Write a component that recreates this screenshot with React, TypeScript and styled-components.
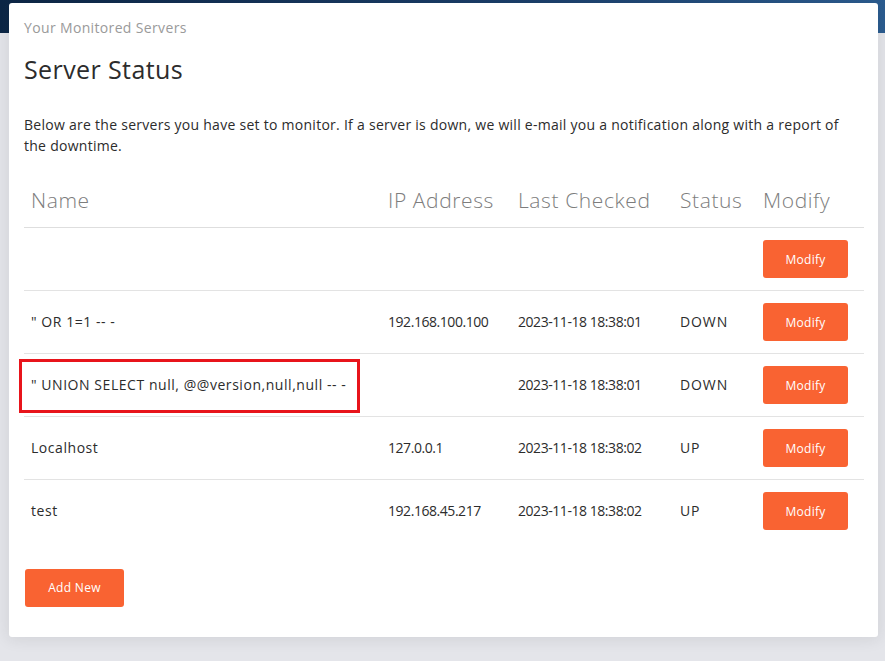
import React from "react";
import styled, { createGlobalStyle } from "styled-components";

const Global = createGlobalStyle`
  html, body { margin: 0; padding: 0; }
  body {
    background: #e4e5ea;
    font-family: "Open Sans", "Liberation Sans", sans-serif;
    color: #2c2c2c;
    width: 885px;
    height: 661px;
    overflow: hidden;
  }
`;

const Page = styled.div`
  position: relative;
  min-height: 661px;
  padding: 3px 7px 0 9px;
  box-sizing: border-box;
  background: linear-gradient(to bottom, transparent 0, transparent 33px, #e4e5ea 33px),
    linear-gradient(to right, #0c2646 0%, #1b3f6b 60%, #2b5c90 100%);
  background-repeat: no-repeat;
  background-size: 100% 100%, 100% 33px;
`;

const Card = styled.div`
  background: #fff;
  border-radius: 3px;
  box-shadow: 0 1px 15px 1px rgba(39, 39, 39, 0.1);
  padding: 16px 14px 29px 15px;
  box-sizing: border-box;
  height: 634px;
`;

const Category = styled.div`
  font-size: 14px;
  color: #9a9a9a;
  line-height: 18px;
  letter-spacing: 0.35px;
`;

const Title = styled.h4`
  margin: 17px 0 0;
  font-size: 25px;
  font-weight: 400;
  line-height: 30px;
  letter-spacing: 0.4px;
  color: #2c2c2c;
`;

const Intro = styled.p`
  margin: 30px 0 0;
  font-size: 14px;
  line-height: 21px;
  letter-spacing: 0.27px;
  color: #2c2c2c;
`;

const Table = styled.table`
  width: 100%;
  margin-top: 20px;
  border-collapse: collapse;
`;

const Th = styled.th<{ $w?: number }>`
  text-align: left;
  font-weight: 300;
  font-size: 21px;
  letter-spacing: 0.6px;
  color: #7d7d7d;
  padding: 10px 7px 13px 7px;
  height: 51px;
  box-sizing: border-box;
  border-bottom: 1px solid #dedede;
  white-space: nowrap;
  ${(p) => (p.$w ? `width: ${p.$w}px;` : "")}
`;

const Td = styled.td<{ $spacing?: number }>`
  font-size: 14px;
  line-height: 20px;
  letter-spacing: ${(p) => p.$spacing ?? 0.55}px;
  color: #2c2c2c;
  padding: 0 7px;
  height: 63px;
  box-sizing: border-box;
  border-bottom: 1px solid #e3e3e3;
  white-space: nowrap;
  vertical-align: middle;
`;

const Row = styled.tr<{ $last?: boolean }>`
  ${(p) => (p.$last ? "td { border-bottom: none; }" : "")}
`;

const NameWrap = styled.span`
  position: relative;
  display: inline-block;
  line-height: 20px;
`;

const Highlight = styled.span`
  position: absolute;
  left: -12px;
  right: -14px;
  top: -16px;
  bottom: -18px;
  border: 3px solid #e8141b;
  pointer-events: none;
`;

const Button = styled.button<{ $wide?: boolean }>`
  font-family: inherit;
  background: #f96332;
  color: #fff;
  border: none;
  border-radius: 3px;
  font-size: 12px;
  letter-spacing: 0.3px;
  height: 38px;
  width: ${(p) => (p.$wide ? 99 : 85)}px;
  padding: 0;
  cursor: pointer;
`;

const Footer = styled.div`
  margin-top: 26px;
  padding-left: 1px;
`;

type Server = { name: string; ip: string; checked: string; status: string; flag?: boolean };

const servers: Server[] = [
  { name: "", ip: "", checked: "", status: "" },
  { name: '" OR 1=1 -- -', ip: "192.168.100.100", checked: "2023-11-18 18:38:01", status: "DOWN" },
  { name: '" UNION SELECT null, @@version,null,null -- -', ip: "", checked: "2023-11-18 18:38:01", status: "DOWN", flag: true },
  { name: "Localhost", ip: "127.0.0.1", checked: "2023-11-18 18:38:02", status: "UP" },
  { name: "test", ip: "192.168.45.217", checked: "2023-11-18 18:38:02", status: "UP" },
];

export default function App() {
  return (
    <>
      <Global />
      <Page>
        <Card>
          <Category>Your Monitored Servers</Category>
          <Title>Server Status</Title>
          <Intro>
            Below are the servers you have set to monitor. If a server is down, we will e-mail you a
            notification along with a report of the downtime.
          </Intro>
          <Table>
            <thead>
              <tr>
                <Th>Name</Th>
                <Th $w={130}>IP Address</Th>
                <Th $w={162}>Last Checked</Th>
                <Th $w={83}>Status</Th>
                <Th $w={108}>Modify</Th>
              </tr>
            </thead>
            <tbody>
              {servers.map((s, i) => (
                <Row key={i} $last={i === servers.length - 1}>
                  <Td>
                    {s.flag ? (
                      <NameWrap>
                        {s.name}
                        <Highlight />
                      </NameWrap>
                    ) : (
                      s.name
                    )}
                  </Td>
                  <Td $spacing={-0.45}>{s.ip}</Td>
                  <Td $spacing={-0.45}>{s.checked}</Td>
                  <Td $spacing={0.9}>{s.status}</Td>
                  <Td>
                    <Button>Modify</Button>
                  </Td>
                </Row>
              ))}
            </tbody>
          </Table>
          <Footer>
            <Button $wide>Add New</Button>
          </Footer>
        </Card>
      </Page>
    </>
  );
}
